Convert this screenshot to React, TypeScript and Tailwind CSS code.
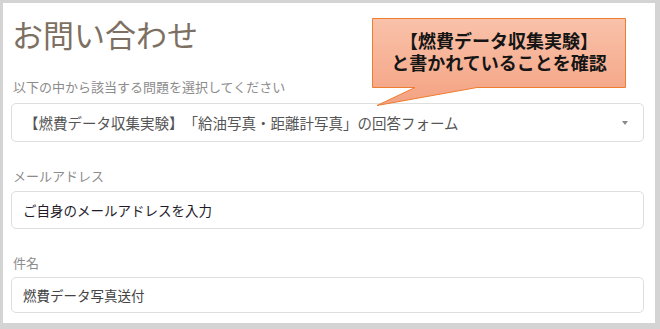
const font = { fontFamily: '"Noto Sans CJK JP", "Noto Sans", sans-serif' };

const Field = (props: { label: string; value: string; className?: string; labelGap: string; boxH: string; textColor: string }) => (
  <div className={props.className}>
    <div className="text-[13px] leading-[18px] text-[#8c8c8c] pl-[2px]">{props.label}</div>
    <div className={`${props.labelGap} ${props.boxH} flex items-center border border-[#dedede] rounded-[5px] pl-[11px] text-[13.5px] ${props.textColor}`}>
      {props.value}
    </div>
  </div>
);

export default function App() {
  return (
    <div style={font} className="relative w-[660px] h-[329px] bg-[#d4d4d4] pt-[3px] pl-[3px] pr-[5px] pb-[6px] [text-spacing-trim:space-all]">
      <div className="w-full h-full bg-white pt-[13px] pl-[8px] pr-[11px] flex flex-col">
        <h1 className="text-[31px] leading-[36px] text-[#7d7063] pl-[1px]">お問い合わせ</h1>

        <div className="mt-[26px]">
          <div className="text-[13px] leading-[18px] text-[#8c8c8c] pl-[2px]">以下の中から該当する問題を選択してください</div>
          <div className="mt-[7px] h-[39px] flex items-center justify-between border border-[#dedede] rounded-[5px] pl-[12px] pr-[15px] text-[14.5px] text-[#555]">
            <span>【燃費データ収集実験】「給油写真・距離計写真」の回答フォーム</span>
            <span className="w-0 h-0 border-l-[3px] border-r-[3px] border-t-[4px] border-l-transparent border-r-transparent border-t-[#8a8a8a]" />
          </div>
        </div>

        <Field className="mt-[25px]" label="メールアドレス" value="ご自身のメールアドレスを入力" labelGap="mt-[6px]" boxH="h-[38px]" textColor="text-[#1f1b2a]" />
        <Field className="mt-[25px]" label="件名" value="燃費データ写真送付" labelGap="mt-[5px]" boxH="h-[36px]" textColor="text-[#444]" />
      </div>

      {/* callout */}
      <div className="absolute left-[372px] top-[18px] w-[254px] h-[89px]">
        <svg width="254" height="89" className="absolute inset-0">
          <defs>
            <linearGradient id="cg" x1="0" y1="0" x2="0" y2="1">
              <stop offset="0" stopColor="#f9c2aa" />
              <stop offset="1" stopColor="#f4a282" />
            </linearGradient>
          </defs>
          <path d="M0.5 0.5 H253.5 V69.5 H105 L5 87.5 L43 69.5 H0.5 Z" fill="url(#cg)" stroke="#ed7d31" strokeWidth="1" />
        </svg>
        <div className="relative h-[66px] flex items-center justify-center text-center text-[18px] leading-[22px] font-bold text-[#151515]">
          <p>【燃費データ収集実験】<br />と書かれていることを確認</p>
        </div>
      </div>
    </div>
  );
}
